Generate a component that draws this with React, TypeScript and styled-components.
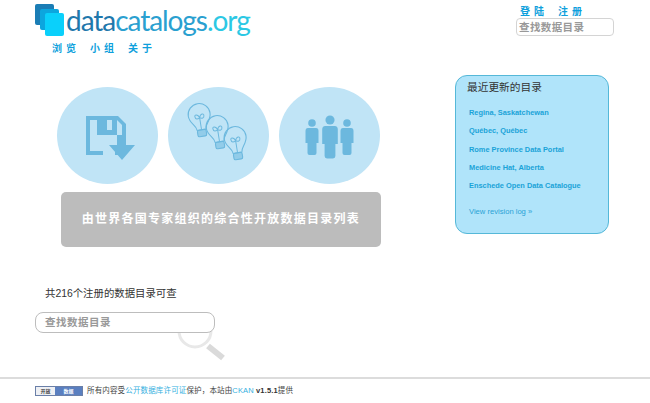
import { FC } from 'react'
import styled, { createGlobalStyle } from 'styled-components'

const CJK = '"Liberation Sans", "Noto Sans CJK SC", sans-serif'

const recentCatalogs = [
  'Regina, Saskatchewan',
  'Québec, Québec',
  'Rome Province Data Portal',
  'Medicine Hat, Alberta',
  'Enschede Open Data Catalogue',
]

const Bulb: FC<{ x: number; y: number }> = ({ x, y }) => (
  <g transform={`translate(${x} ${y}) rotate(-9) scale(1.1)`} fill="none" stroke="#6cb8de" strokeWidth="1">
    <path d="M-4 9 C-4 4 -10 2 -10 -5 A10 10 0 0 1 10 -5 C10 2 4 4 4 9 Z" />
    <path d="M0 9 V-2 M0 -2 C-1 -6 -5 -6 -4 -3 C-4 -1 -2 -1 0 -2 C1 -6 5 -6 4 -3 C4 -1 2 -1 0 -2" strokeWidth="0.9" />
    <rect x="-4" y="9" width="8" height="6" rx="1.5" fill="#6cb8de" fillOpacity="0.55" />
  </g>
)

const Person: FC<{ x: number; y: number; s: number }> = ({ x, y, s }) => (
  <g transform={`translate(${x} ${y}) scale(${s})`} fill="#6cb8de">
    <circle cx="0" cy="0" r="3.8" />
    <path d="M-4 5 H4 Q6.5 5 6.5 8 V20 H4.5 V30 Q4.5 32 2.5 32 H-2.5 Q-4.5 32 -4.5 30 V20 H-6.5 V8 Q-6.5 5 -4 5 Z" />
  </g>
)

const App: FC = () => (
  <Page>
    <GlobalStyle />
    <Header>
      <Brand>
        <LogoRow>
          <svg width="31" height="33" viewBox="0 0 31 33">
            <rect x="0" y="0" width="19" height="21" rx="2" fill="#1b7db5" />
            <rect x="5" y="5" width="19" height="21" rx="2" fill="#0ca6de" />
            <rect x="10" y="9" width="19" height="23" rx="2" fill="#0ad0fb" />
          </svg>
          <LogoText>
            <span className="data">data</span>
            <span className="catalogs">catalogs</span>
            <span className="org">.org</span>
          </LogoText>
        </LogoRow>
        <Nav>
          <NavLink>浏览</NavLink>
          <NavLink>小组</NavLink>
          <NavLink>关于</NavLink>
        </Nav>
      </Brand>
      <Account>
        <AccountLinks>
          <NavLink>登陆</NavLink>
          <NavLink>注册</NavLink>
        </AccountLinks>
        <HeaderSearch>查找数据目录</HeaderSearch>
      </Account>
    </Header>

    <Main>
      <Intro>
        <Circles>
          <Circle>
            <svg width="101" height="97" viewBox="0 0 101 97">
              <path fill="#6cb8de" d="M29 29 H61 L69 37 V68 H29 Z" />
              <path fill="#c0e4f6" d="M33 33 H60 L65 38 V64 H33 Z" />
              <path fill="#6cb8de" d="M40 29 H60 V48 H40 Z" />
              <path fill="#c0e4f6" d="M50 33 H55 V43 H50 Z" />
              <path fill="#c0e4f6" d="M46 56 H58 V70 H46 Z" />
              <path fill="#6cb8de" d="M60 48 H69 V58 H78 L65 73 L52 58 H60 Z" />
            </svg>
          </Circle>
          <Circle>
            <svg width="101" height="97" viewBox="0 0 101 97">
              <Bulb x={32} y={33} />
              <Bulb x={50} y={45} />
              <Bulb x={68} y={56} />
            </svg>
          </Circle>
          <Circle>
            <svg width="101" height="97" viewBox="0 0 101 97">
              <Person x={33} y={36} s={1} />
              <Person x={68} y={36} s={1} />
              <Person x={51} y={33} s={1.2} />
            </svg>
          </Circle>
        </Circles>
        <Tagline>由世界各国专家组织的综合性开放数据目录列表</Tagline>
      </Intro>

      <Recent>
        <RecentTitle>最近更新的目录</RecentTitle>
        <RecentList>
          {recentCatalogs.map((name) => (
            <RecentItem key={name}>{name}</RecentItem>
          ))}
        </RecentList>
        <RevisionLog>View revision log »</RevisionLog>
      </Recent>
    </Main>

    <SearchSection>
      <CountText>共216个注册的数据目录可查</CountText>
      <SearchWrap>
        <Magnifier width="52" height="44" viewBox="0 0 52 44">
          <circle cx="22" cy="12" r="16" fill="none" stroke="#e8e8e8" strokeWidth="3" />
          <path d="M35 27 L50 39" stroke="#dadada" strokeWidth="6" />
        </Magnifier>
        <SearchBox>查找数据目录</SearchBox>
      </SearchWrap>
    </SearchSection>

    <Footer>
      <LicenseBadge>
        <span className="left">开放</span>
        <span className="right">数据</span>
      </LicenseBadge>
      <FooterText>
        所有内容受<a>公开数据库许可证</a>保护，本站由<a>CKAN</a> <b>v1.5.1</b>提供
      </FooterText>
    </Footer>
  </Page>
)

export default App

const GlobalStyle = createGlobalStyle`
  body {
    margin: 0;
    background: #fff;
  }
`

const Page = styled.div`
  width: 650px;
  height: 403px;
  overflow: hidden;
  font-family: ${CJK};
`

const Header = styled.header`
  height: 75px;
  display: flex;
  justify-content: space-between;
  padding: 4px 36px 0 35px;
  box-sizing: border-box;
`

const Brand = styled.div`
  display: flex;
  flex-direction: column;
`

const LogoRow = styled.div`
  display: flex;
  align-items: flex-start;
  height: 38px;
`

const LogoText = styled.div`
  font-family: Lato, sans-serif;
  font-weight: 400;
  font-size: 28px;
  line-height: 32px;
  letter-spacing: -1.05px;

  .data {
    color: #1f78ac;
  }
  .catalogs {
    color: #2aa0d0;
  }
  .org {
    color: #2cc8e4;
  }
`

const Nav = styled.nav`
  display: flex;
  gap: 10px;
  padding-left: 17px;
`

const NavLink = styled.a`
  font-size: 10px;
  line-height: 14px;
  font-weight: 700;
  letter-spacing: 4px;
  color: #0e9fdc;
`

const Account = styled.div`
  width: 98px;
  display: flex;
  flex-direction: column;
`

const AccountLinks = styled.div`
  display: flex;
  gap: 10px;
  padding: 1px 0 0 4px;
  height: 13px;
`

const HeaderSearch = styled.div`
  height: 18px;
  box-sizing: border-box;
  border: 1px solid #d4d4d4;
  border-radius: 4px;
  padding-left: 2px;
  font-size: 10.5px;
  line-height: 16px;
  font-weight: 700;
  letter-spacing: 0.4px;
  color: #999;
`

const Main = styled.main`
  display: flex;
  height: 178px;
`

const Intro = styled.section`
  width: 455px;
  padding: 12px 0 0 57px;
  box-sizing: border-box;
`

const Circles = styled.div`
  display: flex;
  gap: 10px;
`

const Circle = styled.div`
  width: 101px;
  height: 97px;
  border-radius: 50%;
  background: #c0e4f6;
  svg {
    display: block;
  }
`

const Tagline = styled.div`
  width: 320px;
  height: 55px;
  margin: 8px 0 0 4px;
  border-radius: 5px;
  background: #bcbcbc;
  color: #fff;
  font-size: 12px;
  font-weight: 700;
  letter-spacing: 1.25px;
  line-height: 55px;
  text-align: center;
`

const Recent = styled.aside`
  width: 154px;
  height: 159px;
  box-sizing: border-box;
  padding: 3px 0 0 11px;
  background: #b0e4fa;
  border: 1px solid #55b8d8;
  border-radius: 12px;
`

const RecentTitle = styled.h2`
  margin: 0;
  font-family: "Liberation Serif", "Noto Sans CJK SC", serif;
  font-weight: 400;
  font-size: 10.7px;
  line-height: 16px;
  color: #333;
`

const RecentList = styled.ul`
  list-style: none;
  margin: 13px 0 0 2px;
  padding: 0;
  display: flex;
  flex-direction: column;
  gap: 8.3px;
`

const RecentItem = styled.li`
  font-size: 7.4px;
  line-height: 10px;
  font-weight: 700;
  color: #1aa3d8;
`

const RevisionLog = styled.a`
  display: block;
  margin: 16px 0 0 2px;
  font-size: 7.6px;
  line-height: 10px;
  color: #2aa3d6;
`

const SearchSection = styled.section`
  padding-left: 35px;
  height: 124px;
`

const CountText = styled.p`
  margin: 0 0 0 10px;
  padding-top: 33px;
  font-size: 10.4px;
  line-height: 16px;
  color: #333;
`

const SearchWrap = styled.div`
  position: relative;
  width: 180px;
  margin-top: 10px;
`

const SearchBox = styled.div`
  position: relative;
  height: 21px;
  box-sizing: border-box;
  border: 1px solid #bdbdbd;
  border-radius: 8px;
  background: #fff;
  padding-left: 9px;
  font-size: 10.5px;
  font-weight: 700;
  line-height: 19px;
  letter-spacing: 0.5px;
  color: #999;
`

const Magnifier = styled.svg`
  position: absolute;
  left: 138px;
  top: 7px;
`

const Footer = styled.footer`
  height: 25px;
  box-sizing: border-box;
  border-top: 2px solid #dcdcdc;
  padding: 7px 0 0 35px;
  display: flex;
  align-items: flex-start;
  gap: 4px;
`

const LicenseBadge = styled.div`
  width: 48px;
  height: 10px;
  display: flex;
  box-sizing: border-box;
  border: 1px solid #6a7fa8;
  font-size: 5px;
  line-height: 8px;
  font-weight: 700;
  text-align: center;

  .left {
    width: 19px;
    background: #eef0f4;
    color: #444;
  }
  .right {
    flex: 1;
    background: #5a7fc0;
    color: #fff;
  }
`

const FooterText = styled.p`
  margin: 0;
  font-size: 7.5px;
  line-height: 10px;
  letter-spacing: 0.15px;
  color: #444;

  a {
    color: #35b0e0;
  }
  b {
    color: #333;
  }
`
